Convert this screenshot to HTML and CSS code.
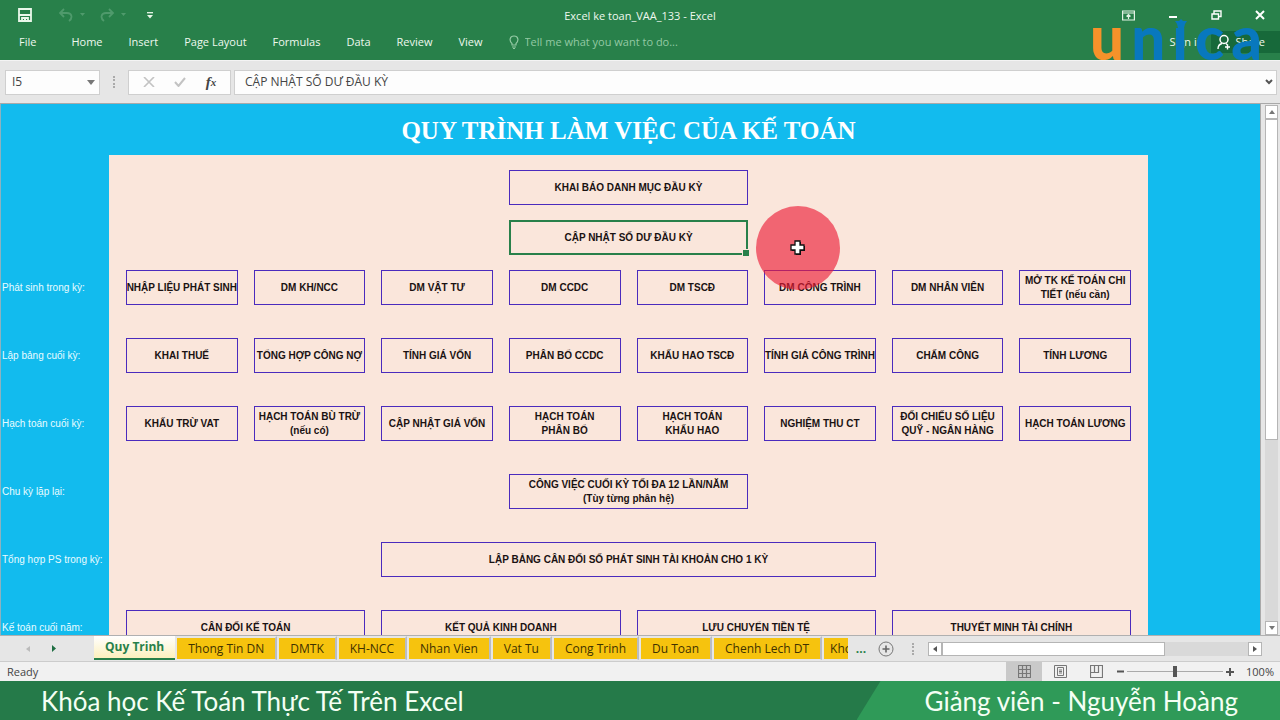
FILE: index.html
```html
<!DOCTYPE html>
<html lang="vi">
<head>
<meta charset="utf-8">
<title>Excel ke toan_VAA_133 - Excel</title>
<link rel="stylesheet" href="styles.css">
</head>
<body>
<header class="top">
  <div class="titlebar">
    <div class="quick">
      <button class="tool save" aria-label="Save"><svg width="14" height="14" viewBox="0 0 14 14"><path d="M1 1h12v12H1zM1 7h12M4 13v-3h6v3" fill="none" stroke="#eaf7ea" stroke-width="1.800"/><path d="M6 10h2v3H6z" fill="#eaf7ea"/></svg></button>
      <button class="tool undo" aria-label="Undo"><svg width="26" height="14" viewBox="0 0 26 14"><path d="M5 1L1 5l4 4M1 5h7c5 0 6 5 2 8" fill="none" stroke="#4f9a6c" stroke-width="1.800"/><path d="M21 5h5l-2.500 3z" fill="#4f9a6c"/></svg></button>
      <button class="tool redo" aria-label="Redo"><svg width="26" height="14" viewBox="0 0 26 14"><path d="M9 1l4 4-4 4M13 5H6C1 5 0 10 4 13" fill="none" stroke="#4f9a6c" stroke-width="1.800"/><path d="M21 5h5l-2.500 3z" fill="#4f9a6c"/></svg></button>
      <button class="tool" aria-label="Customize toolbar"><svg width="6" height="7" viewBox="0 0 6 7"><path d="M0 .7h6" stroke="#eaf7ea" stroke-width="1.300"/><path d="M0 3h6L3 6.500z" fill="#eaf7ea"/></svg></button>
    </div>
    <h1 class="doc-name">Excel ke toan_VAA_133 - Excel</h1>
    <div class="window">
      <button class="tool" aria-label="Ribbon options"><svg width="13" height="11" viewBox="0 0 13 11"><path d="M.6 1h11.800v9H.6zM1 3h11M6.500 9V5M4.500 6.500l2-2 2 2" fill="none" stroke="#e4f3e6" stroke-width="1.200"/></svg></button>
      <button class="tool" aria-label="Minimize"><svg width="10" height="11" viewBox="0 0 10 11"><path d="M1 7h8" stroke="#fff" stroke-width="2"/></svg></button>
      <button class="tool" aria-label="Restore"><svg width="11" height="10" viewBox="0 0 11 10"><path d="M1 4h6.500v5H1zM3 4V1h7v5.500H8" fill="none" stroke="#fff" stroke-width="1.400"/></svg></button>
      <button class="tool" aria-label="Close"><svg width="10" height="10" viewBox="0 0 10 10"><path d="M1 1l8 8M9 1L1 9" stroke="#fff" stroke-width="2"/></svg></button>
    </div>
  </div>
  <nav class="ribbon">
    <button>File</button><button>Home</button><button>Insert</button><button>Page Layout</button><button>Formulas</button><button>Data</button><button>Review</button><button>View</button>
    <label class="tell"><svg width="10" height="14" viewBox="0 0 10 14"><path d="M3 10V8.500C0 6 .5 1 5 1s5 5 2 7.500V10zM3 12h4M4 13.500h2" fill="none" stroke="#93c9a4" stroke-width="1.200"/></svg><input type="text" placeholder="Tell me what you want to do..." aria-label="Tell me what you want to do"></label>
    <div class="account">
      <button class="sign">Sign in</button>
      <button class="share"><svg width="14" height="16" viewBox="0 0 14 16"><circle cx="7" cy="5.500" r="4" fill="none" stroke="#fff" stroke-width="1.500"/><path d="M1 15c0-3 2-5 4-5.500M9 9.500l2 2M8 13h5M10.500 10.500v5" fill="none" stroke="#fff" stroke-width="1.400"/></svg>Share</button>
    </div>
  </nav>
  <div class="brand"><span class="brand-u">u</span><span>n</span><span class="brand-i">ı<svg width="12" height="9" viewBox="0 0 12 9"><path d="M6 0l2 2h4l-2 3-1 4H3L2 5 0 2h4z" fill="#0878be"/></svg></span><span>c</span><span>a</span></div>
</header>

<div class="formula">
  <div class="namebox"><input type="text" value="I5" aria-label="Name box"><svg width="8" height="5" viewBox="0 0 8 5"><path d="M0 0h8L4 5z" fill="#777"/></svg></div>
  <span class="grip"></span>
  <div class="fx">
    <button class="tool" aria-label="Cancel"><svg width="12" height="10" viewBox="0 0 12 10"><path d="M1 0l10 10M11 0L1 10" stroke="#c3c3c3" stroke-width="1.600"/></svg></button>
    <button class="tool" aria-label="Enter"><svg width="12" height="10" viewBox="0 0 12 10"><path d="M1 5l3.500 4L11 1" fill="none" stroke="#c3c3c3" stroke-width="2"/></svg></button>
    <button class="tool fn" aria-label="Insert function">f<sub>x</sub></button>
  </div>
  <div class="entry"><input type="text" value="CẬP NHẬT SỐ DƯ ĐẦU KỲ" aria-label="Formula bar"><svg width="8" height="6" viewBox="0 0 8 6"><path d="M1 1l3 3 3-3" fill="none" stroke="#555" stroke-width="2"/></svg></div>
</div>

<main class="work">
  <section class="sheet">
    <h2 class="heading">QUY TRÌNH LÀM VIỆC CỦA KẾ TOÁN</h2>
    <div class="line tight"><span class="label"></span><div class="cells"><div class="cell mid">KHAI BÁO DANH MỤC ĐẦU KỲ</div></div></div>
    <div class="line tight"><span class="label"></span><div class="cells"><div class="cell mid selected">CẬP NHẬT SỐ DƯ ĐẦU KỲ</div></div></div>
    <div class="line tight"><span class="label">Phát sinh trong kỳ:</span><div class="cells"><div class="cell">NHẬP LIỆU PHÁT SINH</div><div class="cell">DM KH/NCC</div><div class="cell">DM VẬT TƯ</div><div class="cell">DM CCDC</div><div class="cell">DM TSCĐ</div><div class="cell">DM CÔNG TRÌNH</div><div class="cell">DM NHÂN VIÊN</div><div class="cell">MỞ TK KẾ TOÁN CHI<br>TIẾT (nếu cần)</div></div></div>
    <div class="line"><span class="label">Lập bảng cuối kỳ:</span><div class="cells"><div class="cell">KHAI THUẾ</div><div class="cell">TỔNG HỢP CÔNG NỢ</div><div class="cell">TÍNH GIÁ VỐN</div><div class="cell">PHÂN BỔ CCDC</div><div class="cell">KHẤU HAO TSCĐ</div><div class="cell">TÍNH GIÁ CÔNG TRÌNH</div><div class="cell">CHẤM CÔNG</div><div class="cell">TÍNH LƯƠNG</div></div></div>
    <div class="line"><span class="label">Hạch toán cuối kỳ:</span><div class="cells"><div class="cell">KHẤU TRỪ VAT</div><div class="cell">HẠCH TOÁN BÙ TRỪ<br>(nếu có)</div><div class="cell">CẬP NHẬT GIÁ VỐN</div><div class="cell">HẠCH TOÁN<br>PHÂN BỔ</div><div class="cell">HẠCH TOÁN<br>KHẤU HAO</div><div class="cell">NGHIỆM THU CT</div><div class="cell">ĐỐI CHIẾU SỐ LIỆU<br>QUỸ - NGÂN HÀNG</div><div class="cell">HẠCH TOÁN LƯƠNG</div></div></div>
    <div class="line"><span class="label">Chu kỳ lặp lại:</span><div class="cells"><div class="cell mid">CÔNG VIỆC CUỐI KỲ TỐI ĐA 12 LẦN/NĂM<br>(Tùy từng phân hệ)</div></div></div>
    <div class="line"><span class="label">Tổng hợp PS trong kỳ:</span><div class="cells"><div class="cell wide">LẬP BẢNG CÂN ĐỐI SỐ PHÁT SINH TÀI KHOẢN CHO 1 KỲ</div></div></div>
    <div class="line"><span class="label">Kế toán cuối năm:</span><div class="cells"><div class="cell pair">CÂN ĐỐI KẾ TOÁN</div><div class="cell pair">KẾT QUẢ KINH DOANH</div><div class="cell pair">LƯU CHUYỂN TIỀN TỆ</div><div class="cell pair">THUYẾT MINH TÀI CHÍNH</div></div></div>
    <div class="spot"><svg width="16" height="16" viewBox="0 0 16 16"><path d="M6 2h5v4h4v5h-4v4H6v-4H2V6h4z" fill="#111"/><path d="M5 1h5v4h4v5h-4v4H5v-4H1V5h4z" fill="#fff" stroke="#111" stroke-width="1.300"/></svg></div>
  </section>
  <div class="vscroll">
    <button aria-label="Scroll up"><svg width="6" height="4" viewBox="0 0 6 4"><path d="M0 4h6L3 0z" fill="#777"/></svg></button>
    <div class="vtrack"><div class="vthumb"></div></div>
    <button aria-label="Scroll down"><svg width="6" height="4" viewBox="0 0 6 4"><path d="M0 0h6L3 4z" fill="#777"/></svg></button>
  </div>
</main>

<div class="tabs">
  <div class="tabnav">
    <button class="tool" aria-label="Previous sheets"><svg width="4" height="6" viewBox="0 0 4 6"><path d="M4 0v6L0 3z" fill="#bbb"/></svg></button>
    <button class="tool" aria-label="Next sheets"><svg width="4" height="7" viewBox="0 0 4 7"><path d="M0 0v7l4-3.500z" fill="#1e6e42"/></svg></button>
  </div>
  <div class="tablist">
    <button class="tab active">Quy Trinh</button><button class="tab">Thong Tin DN</button><button class="tab">DMTK</button><button class="tab">KH-NCC</button><button class="tab">Nhan Vien</button><button class="tab">Vat Tu</button><button class="tab">Cong Trinh</button><button class="tab">Du Toan</button><button class="tab">Chenh Lech DT</button><button class="tab last">Kho</button>
  </div>
  <button class="tool more" aria-label="More sheets">...</button>
  <button class="tool" aria-label="New sheet"><svg width="16" height="16" viewBox="0 0 16 16"><circle cx="8" cy="8" r="7" fill="none" stroke="#777"/><path d="M4.500 8h7M8 4.500v7" stroke="#666" stroke-width="1.600"/></svg></button>
  <span class="grip small"></span>
  <div class="hscroll">
    <button aria-label="Scroll left"><svg width="4" height="6" viewBox="0 0 4 6"><path d="M4 0v6L0 3z" fill="#555"/></svg></button>
    <div class="htrack"><div class="hthumb"></div></div>
    <button aria-label="Scroll right"><svg width="4" height="6" viewBox="0 0 4 6"><path d="M0 0v6l4-3z" fill="#555"/></svg></button>
  </div>
</div>

<div class="status">
  <span class="ready">Ready</span>
  <button class="view on" aria-label="Normal view"><svg width="13" height="13" viewBox="0 0 13 13"><path d="M.5.5h12v12H.5zM.5 4.500h12M.5 8.500h12M4.500.5v12M8.500.5v12" fill="none" stroke="#777" stroke-width="1.200"/></svg></button>
  <button class="view" aria-label="Page layout view"><svg width="13" height="13" viewBox="0 0 13 13"><path d="M.5.5h12v12H.5zM3.500 2.500h6v8h-6zM5 5h3M5 6.500h3M5 8h3" fill="none" stroke="#777"/></svg></button>
  <button class="view" aria-label="Page break view"><svg width="13" height="13" viewBox="0 0 13 13"><path d="M.5.5h12v12H.5zM4.500.5v7h-4M4.500 7.500h4v-7" fill="none" stroke="#777" stroke-width="1.200"/></svg></button>
  <div class="zoom">
    <button class="tool" aria-label="Zoom out"><svg width="7" height="7" viewBox="0 0 7 7"><path d="M0 3.500h7" stroke="#555" stroke-width="2"/></svg></button>
    <input type="range" min="0" max="100" value="50" aria-label="Zoom">
    <button class="tool" aria-label="Zoom in"><svg width="8" height="8" viewBox="0 0 8 8"><path d="M0 4h8M4 0v8" stroke="#555" stroke-width="2"/></svg></button>
  </div>
  <span class="percent">100%</span>
</div>

<footer class="banner"><span class="course">Khóa học Kế Toán Thực Tế Trên Excel</span><span class="teacher">Giảng viên - Nguyễn Hoàng</span></footer>
</body>
</html>
```
FILE: styles.css
```css
* { box-sizing: border-box; }
body {
  margin: 0;
  height: 100vh;
  display: flex;
  flex-direction: column;
  overflow: hidden;
  font: 11px/16px "Open Sans", "Noto Sans", sans-serif;
  color: #444;
  background: #e6e6e6;
}
button, input { font: inherit; color: inherit; border: 0; padding: 0; margin: 0; background: none; }
svg { display: block; flex: none; }
.tool { display: flex; align-items: center; justify-content: center; }

.top { position: relative; flex: none; height: 60px; background: #28804a; color: #eef8ee; }
.titlebar { display: grid; grid-template-columns: 1fr auto 1fr; align-items: center; height: 30px; }
.quick { display: flex; align-items: center; padding-left: 18px; }
.save { margin-right: 27px; }
.undo { margin-right: 15px; }
.redo { margin-right: 21px; }
.doc-name { margin: 0; padding-top: 2px; font-size: 11px; font-weight: 400; }
.window { display: flex; align-items: center; justify-content: flex-end; gap: 33px; padding-right: 15px; }
.ribbon { display: flex; align-items: center; gap: 26px; height: 24px; padding-left: 19px; }
.ribbon > button:first-child { margin-right: 9px; }
.tell { display: flex; align-items: center; gap: 6px; flex: 1; }
.tell input { flex: 1; min-width: 180px; color: #93c9a4; }
.tell input::placeholder { color: #93c9a4; opacity: 1; }
.account { display: flex; align-items: center; gap: 8px; }
.share { display: flex; align-items: center; gap: 4px; height: 22px; padding: 0 15px 0 6px; background: #17693a; }
.brand {
  position: absolute;
  right: 18px;
  bottom: -7px;
  display: flex;
  justify-content: space-between;
  width: 172px;
  font: 900 60px/60px Lato, sans-serif;
  color: #0878be;
}
.brand-u { color: #f6922a; }
.brand-i { position: relative; }
.brand-i svg { position: absolute; top: 12px; left: 3px; }

.formula { flex: none; display: flex; align-items: center; height: 43px; padding: 0 3px 0 5px; border-top: 1px solid #f4f4f4; font-size: 12px; }
.namebox, .fx, .entry { display: flex; align-items: center; height: 25px; background: #fdfdfd; border: 1px solid #cfcfcf; }
.namebox { width: 95px; padding: 0 4px 0 6px; }
.namebox input { flex: 1; min-width: 0; }
.grip { height: 12px; border-left: 2px dotted #aaa; margin: 0 13px; }
.fx { width: 103px; justify-content: space-around; padding: 0 4px; }
.fn { font: italic 700 15px/16px "Liberation Serif", serif; }
.fn sub { font-size: 11px; line-height: 8px; }
.entry { flex: 1; margin-left: 3px; padding: 0 3px 0 10px; }
.entry input { flex: 1; min-width: 0; }

.work { flex: 1; min-height: 0; display: flex; border-top: 1px solid #a9a9a9; }
.sheet {
  position: relative;
  flex: 1;
  overflow: hidden;
  background: #12bbee;
  border-left: 1px solid #8db2c0;
  border-right: 1px solid #a9a9a9;
  font: 10px/14px "Liberation Sans", Arial, sans-serif;
}
.heading { margin: 0; height: 51px; padding-right: 4px; text-align: center; color: #fff; font: 700 25px/54px "Liberation Serif", serif; }
.line { display: grid; grid-template-columns: 108px 1fr 112px; height: 68px; }
.line.tight { height: 50px; }
.label { align-self: end; padding-left: 1px; line-height: 35px; color: #e9fbff; white-space: nowrap; }
.cells { display: grid; grid-template-columns: repeat(8, minmax(0, 1fr)); gap: 16px; align-items: end; padding: 0 17px; background: #fae6db; }
.cell {
  display: flex;
  align-items: center;
  justify-content: center;
  height: 35px;
  border: 1px solid #4a2bbd;
  color: #1a1212;
  font-weight: 700;
  text-align: center;
  white-space: nowrap;
}
.mid { grid-column: 4 / span 2; }
.wide { grid-column: 3 / span 4; }
.pair { grid-column: span 2; }
.selected { position: relative; border: 2px solid #28804a; }
.selected::after { content: ""; position: absolute; right: -3px; bottom: -3px; width: 6px; height: 6px; background: #28804a; border: solid #fae6db; border-width: 1px 0 0 1px; }
.spot { position: absolute; left: 755px; top: 102px; width: 84px; height: 84px; border-radius: 50%; display: flex; align-items: center; justify-content: center; background: rgba(237, 28, 55, .64); }

.vscroll { flex: none; display: flex; flex-direction: column; width: 19px; padding: 1px 2px 0 4px; }
.vscroll button, .hscroll button { flex: none; display: flex; align-items: center; justify-content: center; width: 13px; height: 14px; background: #fff; border: 1px solid #b5b5b5; }
.vtrack { flex: 1; background: #d9d9d9; }
.vthumb { height: 64%; background: #fff; border: 1px solid #b5b5b5; }

.tabs { flex: none; display: flex; align-items: center; height: 27px; border-top: 1px solid #b0b0b0; border-bottom: 1px solid #ccc; padding-right: 18px; font-size: 12px; }
.tabnav { flex: none; display: flex; gap: 22px; width: 94px; padding-left: 26px; }
.tablist { display: flex; flex: 0 1 754px; min-width: 0; height: 24px; align-self: start; overflow: hidden; }
.tab { flex: none; padding: 0 11px; background: #f6c30e; color: #3f3100; border: solid #e6e6e6; border-width: 2px 2px 1px; border-right-color: #b9bcc4; }
.tab.active { background: linear-gradient(#fff, #fdf0bd); color: #28804a; font-weight: 700; border: 0; border-bottom: 2px solid #28804a; }
.tab.last { flex: 0 1 auto; min-width: 0; padding: 0 0 0 6px; border-right: 0; overflow: hidden; }
.more { flex: none; width: 26px; color: #28804a; font-weight: 700; }
.more + .tool { margin-left: 4px; }
.grip.small { margin: 0 14px 0 18px; }
.hscroll { flex: 1; display: flex; }
.hscroll button { width: 14px; }
.htrack { flex: 1; background: #d9d9d9; }
.hthumb { width: 73%; height: 14px; background: #fff; border: 1px solid #b5b5b5; }

.status { flex: none; display: flex; align-items: center; height: 19px; padding: 0 6px 0 7px; background: #f1f1f1; }
.ready { flex: 1; }
.view { display: flex; align-items: center; justify-content: center; width: 36px; height: 19px; }
.view.on { background: #c9c9c9; }
.zoom { display: flex; align-items: center; gap: 3px; margin-left: 3px; }
.zoom input { appearance: none; width: 96px; height: 14px; background: linear-gradient(#aaa, #aaa) center / 100% 1px no-repeat; }
.zoom input::-webkit-slider-thumb { appearance: none; width: 4px; height: 11px; background: #555; }
.percent { width: 40px; text-align: right; }

.banner {
  flex: none;
  display: flex;
  align-items: stretch;
  justify-content: space-between;
  height: 39px;
  padding-left: 41px;
  background: #257a49;
  color: #f4fff4;
  font: 26px/40px Lato, sans-serif;
  white-space: nowrap;
}
.teacher { padding: 0 42px 0 68px; background: #2f9a58; clip-path: polygon(24px 0, 100% 0, 100% 100%, 0 100%); }
```
